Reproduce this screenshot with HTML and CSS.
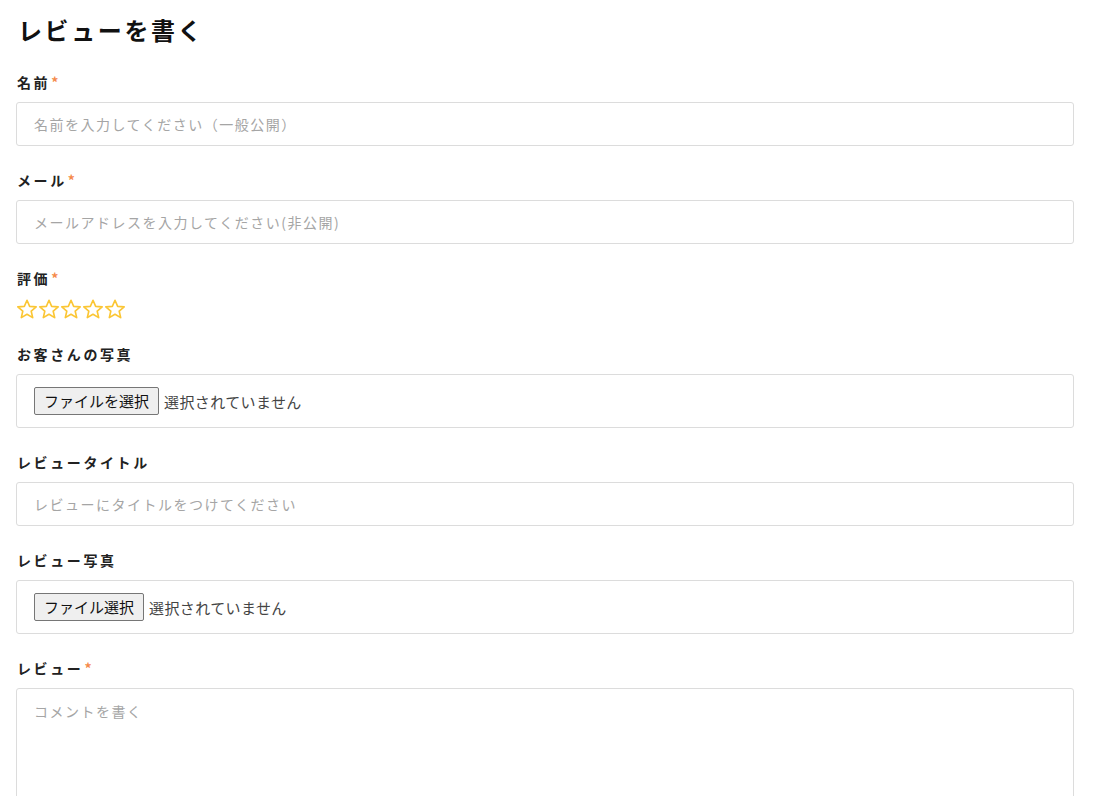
FILE: index.html
```html
<!DOCTYPE html>
<html lang="ja">
<head>
    <meta charset="UTF-8">
    <meta name="viewport" content="width=device-width, initial-scale=1.0">
    <title>レビューを書く</title>
    <link rel="stylesheet" href="styles.css">
</head>
<body>
    <div class="review-form">
        <h2 class="title">レビューを書く</h2>

        <div class="field">
            <label class="field-label">名前<span class="req">*</span></label>
            <input class="text-input" type="text" placeholder="名前を入力してください（一般公開）">
        </div>

        <div class="field">
            <label class="field-label">メール<span class="req">*</span></label>
            <input class="text-input" type="email" placeholder="メールアドレスを入力してください(非公開)">
        </div>

        <div class="field">
            <label class="field-label">評価<span class="req">*</span></label>
            <div class="stars">
                <svg class="star" viewBox="0 0 24 24"><path d="M12 2.5l2.9 6.6 7.1.6-5.4 4.7 1.6 7-6.2-3.7-6.2 3.7 1.6-7L2 9.7l7.1-.6z"/></svg>
                <svg class="star" viewBox="0 0 24 24"><path d="M12 2.5l2.9 6.6 7.1.6-5.4 4.7 1.6 7-6.2-3.7-6.2 3.7 1.6-7L2 9.7l7.1-.6z"/></svg>
                <svg class="star" viewBox="0 0 24 24"><path d="M12 2.5l2.9 6.6 7.1.6-5.4 4.7 1.6 7-6.2-3.7-6.2 3.7 1.6-7L2 9.7l7.1-.6z"/></svg>
                <svg class="star" viewBox="0 0 24 24"><path d="M12 2.5l2.9 6.6 7.1.6-5.4 4.7 1.6 7-6.2-3.7-6.2 3.7 1.6-7L2 9.7l7.1-.6z"/></svg>
                <svg class="star" viewBox="0 0 24 24"><path d="M12 2.5l2.9 6.6 7.1.6-5.4 4.7 1.6 7-6.2-3.7-6.2 3.7 1.6-7L2 9.7l7.1-.6z"/></svg>
            </div>
        </div>

        <div class="field">
            <label class="field-label">お客さんの写真</label>
            <div class="file-box">
                <span class="file-btn">ファイルを選択</span>
                <span class="file-name">選択されていません</span>
            </div>
        </div>

        <div class="field">
            <label class="field-label">レビュータイトル</label>
            <input class="text-input" type="text" placeholder="レビューにタイトルをつけてください">
        </div>

        <div class="field">
            <label class="field-label">レビュー写真</label>
            <div class="file-box">
                <span class="file-btn">ファイル選択</span>
                <span class="file-name">選択されていません</span>
            </div>
        </div>

        <div class="field">
            <label class="field-label">レビュー<span class="req">*</span></label>
            <textarea class="text-area" placeholder="コメントを書く"></textarea>
        </div>
    </div>
</body>
</html>
```

FILE: styles.css
```css
body {
    margin: 0;
    background: #fff;
    font-family: "Noto Sans CJK JP", "Noto Sans", sans-serif;
    color: #222;
}

.review-form {
    width: 1058px;
    padding: 12px 0 0 16px;
}

.title {
    margin: 0 0 24px 2px;
    font-size: 24px;
    line-height: 36px;
    font-weight: bold;
    letter-spacing: 2.6px;
    color: #111;
}

.field {
    margin-bottom: 24px;
}

.field-label {
    display: block;
    margin: 0 0 10px 1px;
    font-size: 14px;
    line-height: 20px;
    font-weight: bold;
    letter-spacing: 2.6px;
}

.req {
    color: #f58a4b;
    margin-left: 1px;
}

.text-input {
    display: block;
    box-sizing: border-box;
    width: 100%;
    height: 44px;
    padding: 0 17px;
    border: 1px solid #dcdcdc;
    border-radius: 3px;
    font-family: inherit;
    font-size: 14px;
    letter-spacing: 1.5px;
    color: #333;
    outline: none;
}

.text-input::placeholder,
.text-area::placeholder {
    color: #a5a5a5;
}

.stars {
    display: flex;
    height: 22px;
}

.star {
    width: 22px;
    height: 22px;
}

.star path {
    fill: none;
    stroke: #fbc634;
    stroke-width: 1.8;
    stroke-linejoin: round;
}

.file-box {
    display: flex;
    align-items: center;
    box-sizing: border-box;
    height: 54px;
    padding: 0 17px;
    border: 1px solid #dcdcdc;
    border-radius: 3px;
}

.file-btn {
    box-sizing: border-box;
    height: 28px;
    padding: 0 9px;
    line-height: 26px;
    background: #efefef;
    border: 1px solid #767676;
    border-radius: 2px;
    font-size: 15px;
    color: #111;
}

.file-name {
    margin-left: 5px;
    font-size: 15px;
    letter-spacing: 0.4px;
    color: #444;
}

.text-area {
    display: block;
    box-sizing: border-box;
    width: 100%;
    height: 150px;
    padding: 12px 17px;
    border: 1px solid #dcdcdc;
    border-radius: 3px;
    font-family: inherit;
    font-size: 14px;
    letter-spacing: 1.5px;
    resize: none;
    outline: none;
}
```
